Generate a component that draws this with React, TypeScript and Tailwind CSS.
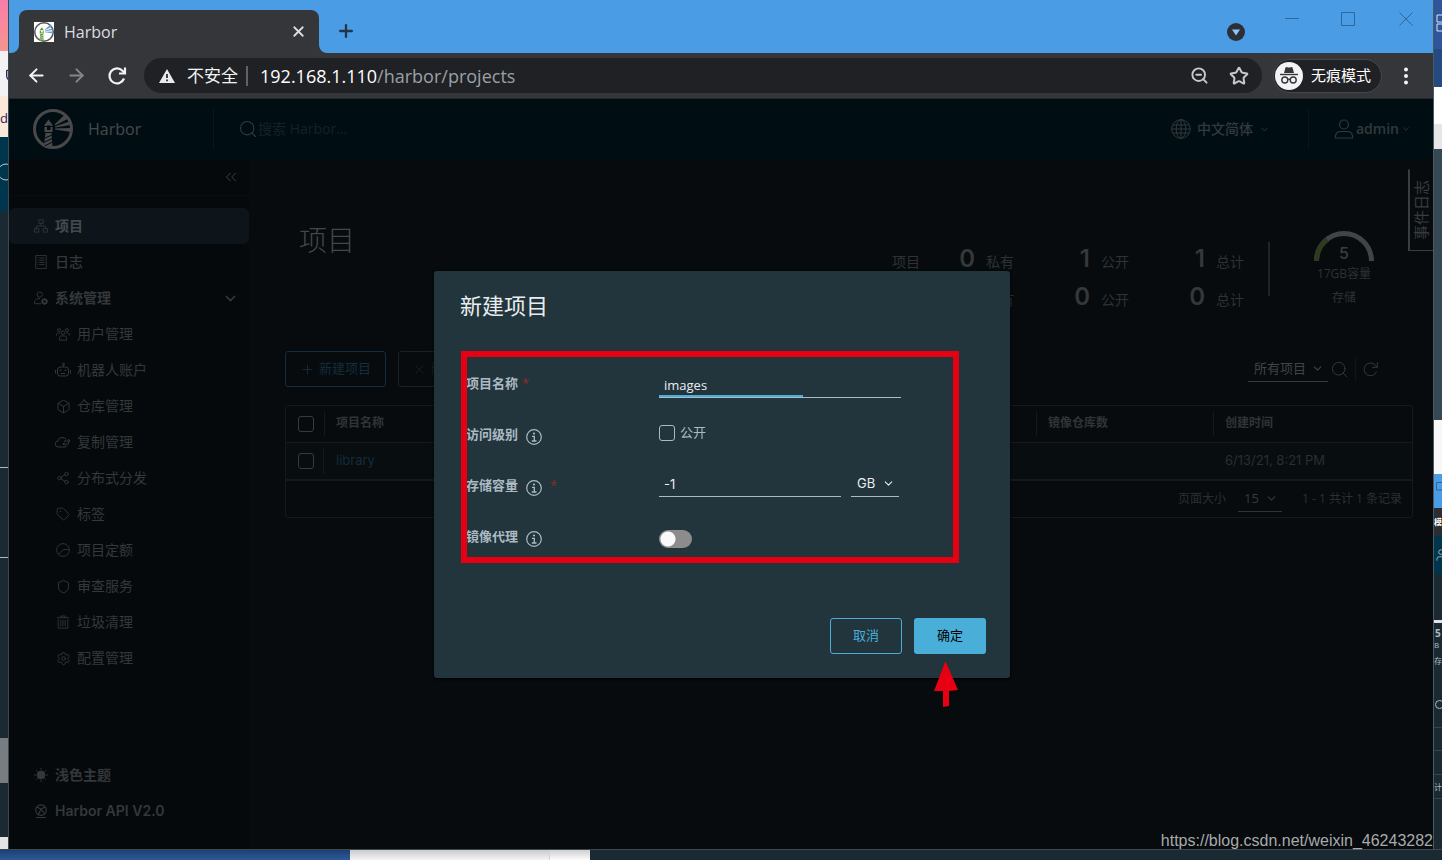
import { FC, ReactNode } from 'react';
import {
  ArrowLeft,
  ArrowRight,
  Box,
  ChevronDown,
  ChevronsLeft,
  Plus,
  Search,
  Settings,
  Share2,
  Shield,
  Star,
  Tag,
  User,
  X,
  ZoomOut,
} from 'lucide-react';

interface IconProps {
  size?: number;
  children?: ReactNode;
}

// Icône au trait sur une grille de 16
const Stroke: FC<IconProps> = ({ size = 14, children }) => (
  <svg width={size} height={size} viewBox="0 0 16 16" fill="none" stroke="currentColor" strokeWidth="1" aria-hidden="true">
    {children}
  </svg>
);

interface HarborLogoProps {
  size: number;
  tower: string;
  ring: string;
  rays: string;
  back: string;
}

const HarborLogo: FC<HarborLogoProps> = ({ size, tower, ring, rays, back }) => (
  <svg width={size} height={size} viewBox="0 0 40 40" aria-hidden="true">
    <circle cx="20" cy="20" r="18.5" fill="none" stroke={ring} strokeWidth="3" />
    <path d="M22 15L32 5.500L35.500 9.500L22 16.500zM22 17.500L36.500 12.500L37.500 16L22 18.500zM22 19.500L38 19V23L22 20.500z" fill={rays} />
    <path d="M11.500 16L15.500 10.500L19.500 16V17H11.500zM11.500 18H19.500V23H11.500zM12.500 24H18.500L19.500 38L11 36z" fill={tower} />
    <path d="M14 16.500h3.500v4.500h-3.500z" fill={back} />
    <path d="M12 29L19 26M11.500 33L19.500 29.500M11.500 37L19.500 33" stroke={back} strokeWidth="1" />
  </svg>
);

const Reload: FC<{ size: number; width: number }> = ({ size, width }) => (
  <svg width={size} height={size} viewBox="0 0 20 20" fill="none" stroke="currentColor" strokeWidth={width} aria-hidden="true">
    <path d="M17 12.500A7.500 7.500 0 1 1 15.500 4.800L17.500 7" />
    <path d="M18 1.500V7.500H12" />
  </svg>
);

const InfoIcon: FC = () => (
  <svg width="16" height="16" viewBox="0 0 16 16" fill="none" stroke="currentColor" aria-hidden="true">
    <circle cx="8" cy="8" r="7.3" strokeWidth="1.200" />
    <circle cx="8" cy="4.500" r="1.100" fill="currentColor" stroke="none" />
    <path d="M6 7.300H8.300V12M5.800 12h4.700" strokeWidth="1.300" />
  </svg>
);

const adminItems: { label: string; icon: ReactNode }[] = [
  {
    label: '用户管理',
    icon: (
      <Stroke>
        <circle cx="8" cy="6.500" r="2" />
        <circle cx="3.500" cy="3.500" r="1.700" />
        <circle cx="12.500" cy="3.500" r="1.700" />
        <path d="M4 15V12Q4 10 8 10T12 12V15zM.5 10V8Q1.500 6.500 4.500 7M15.500 10V8Q14.500 6.500 11.500 7" />
      </Stroke>
    ),
  },
  {
    label: '机器人账户',
    icon: (
      <Stroke size={16}>
        <circle cx="8.500" cy="2" r="1" />
        <path d="M8.500 3V5M5 5H11Q13.500 5 13.500 8V11Q13.500 14 11 14H5Q2.500 14 2.500 11V8Q2.500 5 5 5zM.5 8V11.500M15.500 8V11.500M6 11.500H10" />
        <path d="M5.500 7.500V9M10.500 7.500V9" strokeWidth="1.500" />
      </Stroke>
    ),
  },
  { label: '仓库管理', icon: <Box size={15} strokeWidth={1.5} /> },
  {
    label: '复制管理',
    icon: (
      <Stroke size={16}>
        <path d="M12 11.500Q11.500 13 10 13H3.500A3 3 0 0 1 3 7Q3.500 3.500 7 3.500T11 5.500M9 7H15M13 5L15 7L13 9M14 10H8M9.500 8.500L8 10L9.500 11.500" />
      </Stroke>
    ),
  },
  { label: '分布式分发', icon: <Share2 size={14} strokeWidth={1.5} /> },
  { label: '标签', icon: <Tag size={14} strokeWidth={1.5} /> },
  {
    label: '项目定额',
    icon: (
      <Stroke>
        <circle cx="8" cy="8" r="7.300" />
        <path d="M3 13L8.500 7.500H15" />
      </Stroke>
    ),
  },
  { label: '审查服务', icon: <Shield size={15} strokeWidth={1.5} /> },
  {
    label: '垃圾清理',
    icon: (
      <Stroke>
        <path d="M1 3H15M5.500 3V1.200H10.500V3M2.500 4.500V15H13.500V4.500M5.500 5.500V13M8 5.500V13M10.500 5.500V13" />
      </Stroke>
    ),
  },
  { label: '配置管理', icon: <Settings size={15} strokeWidth={1.5} /> },
];

const TabStrip: FC = () => (
  <div className="flex h-[53px] items-end bg-[#4a9de4] pl-2.5">
    <div className="relative flex h-[43px] w-[300px] items-center rounded-t-lg bg-[#35363a] pr-3 pl-[15px]">
      <svg className="absolute bottom-0 -left-2" width="8" height="8" aria-hidden="true">
        <path d="M8 0V8H0A8 8 0 0 0 8 0z" fill="#35363a" />
      </svg>
      <svg className="absolute -right-2 bottom-0" width="8" height="8" aria-hidden="true">
        <path d="M0 0V8H8A8 8 0 0 1 0 0z" fill="#35363a" />
      </svg>
      <span className="bg-white">
        <HarborLogo size={20} ring="#555555" tower="#5f9a34" rays="#6a9fd0" back="#ffffff" />
      </span>
      <span className="ml-2.5 flex-1 text-base text-[#dcdde0]">Harbor</span>
      <button type="button" aria-label="关闭标签页" className="text-[#dcdde0]">
        <X size={17} strokeWidth={2.5} />
      </button>
    </div>
    <button type="button" aria-label="新标签页" className="mb-3 ml-[17px] text-[#263446]">
      <Plus size={20} strokeWidth={2.8} />
    </button>
    <div className="ml-auto flex h-full items-start text-[#2d679b]">
      <button type="button" aria-label="搜索标签页" className="mt-[23px] mr-10 flex size-[18px] items-center justify-center rounded-full bg-[#2b3036]">
        <svg width="8" height="7" viewBox="0 0 8 7" aria-hidden="true">
          <path d="M0 .5H8L4 6.500z" fill="#8fc4f5" />
        </svg>
      </button>
      <button type="button" aria-label="最小化" className="mt-3 mr-[42px]">
        <svg width="14" height="14" aria-hidden="true"><path d="M0 6.500H14" stroke="currentColor" /></svg>
      </button>
      <button type="button" aria-label="最大化" className="mt-3 mr-11">
        <svg width="14" height="14" aria-hidden="true"><path d="M.5 .5H13.500V13.500H.5z" fill="none" stroke="currentColor" /></svg>
      </button>
      <button type="button" aria-label="关闭" className="mt-3 mr-5">
        <svg width="14" height="14" aria-hidden="true"><path d="M.5 .5L13.500 13.500M13.500 .5L.5 13.500" stroke="currentColor" /></svg>
      </button>
    </div>
  </div>
);

const AddressBar: FC = () => (
  <div className="flex h-[46px] items-center border-b border-[#262729] bg-[#35363a] pr-6 pl-[17px] text-[#f1f3f4]">
    <button type="button" aria-label="后退"><ArrowLeft size={21} strokeWidth={2.3} /></button>
    <button type="button" aria-label="前进" className="ml-[19px] text-[#85868a]"><ArrowRight size={21} strokeWidth={2.3} /></button>
    <button type="button" aria-label="重新加载" className="ml-5"><Reload size={20} width={2.2} /></button>
    <div className="ml-[17px] flex h-[35px] flex-1 items-center rounded-full bg-[#202124] pr-[13px] pl-[15px]">
      <svg width="16" height="14" viewBox="0 0 16 14" aria-hidden="true">
        <path d="M8 0L16 14H0z" fill="#e8eaed" />
        <path d="M8 5V9M8 10.500V12.200" stroke="#202124" strokeWidth="1.700" />
      </svg>
      <span className="ml-3 text-[17px]">不安全</span>
      <span className="ml-2 h-5 w-0.5 bg-[#5f6164]" />
      <span className="ml-3 flex-1 text-lg text-[#9aa0a6]">
        <span className="text-white">192.168.1.110</span>/harbor/projects
      </span>
      <button type="button" aria-label="缩放" className="text-[#c6c8cb]"><ZoomOut size={19} strokeWidth={2.4} /></button>
      <button type="button" aria-label="收藏" className="ml-5 text-[#c6c8cb]"><Star size={20} strokeWidth={2.4} /></button>
    </div>
    <button type="button" className="ml-[11px] flex h-[34px] items-center rounded-full border border-[#46474b] bg-[#202124] pr-2.5 pl-px text-[15px] text-white">
      <svg width="28" height="28" viewBox="0 0 28 28" aria-hidden="true">
        <circle cx="14" cy="14" r="14" fill="#f1f3f4" />
        <path d="M9 11L10.500 5.500Q11 4.500 12.200 5.200Q14 6 15.800 5.200Q17 4.500 17.500 5.500L19 11z" fill="#35363a" />
        <path d="M5 12.500H23" stroke="#35363a" strokeWidth="1.400" />
        <g fill="none" stroke="#35363a" strokeWidth="1.400">
          <circle cx="9.800" cy="18" r="3" />
          <circle cx="18.200" cy="18" r="3" />
          <path d="M12.800 17.500Q14 16.800 15.200 17.500" />
        </g>
      </svg>
      <span className="ml-2">无痕模式</span>
    </button>
    <button type="button" aria-label="菜单" className="ml-[21px]">
      <svg width="6" height="18" viewBox="0 0 6 18" fill="currentColor" aria-hidden="true">
        <circle cx="3" cy="2.500" r="2" />
        <circle cx="3" cy="9" r="2" />
        <circle cx="3" cy="15.500" r="2" />
      </svg>
    </button>
  </div>
);

const PortalHeader: FC = () => (
  <header className="flex h-[60px] items-center bg-[#000e14] pl-6 text-[#33393b]">
    <HarborLogo size={40} ring="#494949" tower="#494949" rays="#494949" back="#000e14" />
    <span className="ml-[15px] w-[125px] text-base text-[#494949]">Harbor</span>
    <span className="h-10 w-px bg-[#07171e]" />
    <label className="ml-6 flex flex-1 items-center">
      <Search size={20} strokeWidth={1.4} />
      <input
        type="text"
        placeholder="搜索 Harbor..."
        aria-label="搜索 Harbor"
        className="w-40 bg-transparent text-sm placeholder:text-[#162126]"
      />
    </label>
    <button type="button" className="flex items-center text-sm font-medium">
      <svg width="20" height="20" viewBox="0 0 20 20" fill="none" stroke="currentColor" aria-hidden="true">
        <circle cx="10" cy="10" r="9.300" />
        <ellipse cx="10" cy="10" rx="4.800" ry="9.300" />
        <path d="M10 .7V19.300M.7 10H19.300M2 6H18M2 14H18" />
      </svg>
      <span className="ml-1.5">中文简体</span>
      <ChevronDown size={11} strokeWidth={2} className="ml-1.5" />
    </button>
    <span className="ml-[38px] h-10 w-px bg-[#07171e]" />
    <button type="button" className="mr-[22px] ml-[25px] flex items-center text-sm font-semibold">
      <svg width="20" height="20" viewBox="0 0 20 20" fill="none" stroke="currentColor" strokeWidth="1.200" aria-hidden="true">
        <circle cx="10" cy="5.500" r="4.500" />
        <path d="M1.500 19V17Q2 12.500 7 12.500H13Q18 12.500 18.500 17V19z" />
      </svg>
      <span className="ml-0.5">admin</span>
      <ChevronDown size={10} strokeWidth={2} className="ml-0.5" />
    </button>
  </header>
);

const Sidebar: FC = () => (
  <nav className="flex w-60 shrink-0 flex-col bg-[#05090c] text-sm text-[#33383a]">
    <div className="flex h-[37px] items-center justify-end border-b border-[#090d10] pr-[9px]">
      <button type="button" aria-label="收起"><ChevronsLeft size={18} strokeWidth={1.4} /></button>
    </div>
    <a href="#projects" className="mt-3 flex h-9 items-center gap-[7px] rounded-md bg-[#0d151b] pl-[25px] font-bold">
      <Stroke>
        <path d="M5.500 1H10.500V5H5.500zM.5 11H5.500V15H.5zM10.500 11H15.500V15H10.500zM8 5V8M3 11V8H13V11" />
      </Stroke>
      <span className="text-[#454a4d]">项目</span>
    </a>
    <a href="#logs" className="flex h-9 items-center gap-[7px] pl-[25px] font-medium">
      <Stroke>
        <path d="M2 .5H14V15.500H2zM6 3.500H12M6 6H12M6 8.500H12M6 11H12M4 3.500H5M4 6H5M4 8.500H5M4 11H5" />
      </Stroke>
      日志
    </a>
    <button type="button" className="flex h-9 items-center gap-[7px] pr-2.5 pl-[25px] font-bold">
      <Stroke>
        <circle cx="6.500" cy="4" r="3" />
        <path d="M8 14.500H.5V11.500Q2 8.500 7 8.500" />
        <circle cx="12" cy="12" r="2.500" strokeWidth="2" />
        <path d="M12 8V16M8 12H16M9.200 9.200L14.800 14.800M14.800 9.200L9.200 14.800" strokeDasharray="1.500 5" />
      </Stroke>
      系统管理
      <ChevronDown size={17} strokeWidth={2} className="ml-auto" />
    </button>
    {adminItems.map(item => (
      <a key={item.label} href="#admin" className="flex h-9 items-center pl-[46px]">
        <span className="flex w-4 justify-center">{item.icon}</span>
        <span className="ml-1.5">{item.label}</span>
      </a>
    ))}
    <button type="button" className="mt-auto flex h-9 items-center gap-[7px] pl-[25px] font-bold">
      <Stroke>
        <circle cx="8" cy="8" r="4.500" fill="currentColor" />
        <path d="M8 0V2.500M8 13.500V16M0 8H2.500M13.500 8H16M2.500 2.500L4 4M12 12L13.500 13.500M13.500 2.500L12 4M4 12L2.500 13.500" />
      </Stroke>
      浅色主题
    </button>
    <a href="#api" className="mb-5 flex h-9 items-center gap-[7px] pl-[25px] font-['Inter',sans-serif] font-semibold">
      <Stroke>
        <circle cx="8" cy="7" r="6" strokeWidth="1.300" />
        <path d="M3 3L8 6L13 3M8 6L5 12M8 6L12 11M2.500 15.500H13.500" strokeWidth="1.300" />
      </Stroke>
      Harbor API V2.0
    </a>
  </nav>
);

const statRows = [
  { label: '项目', priv: 0, pub: 1, total: 1 },
  { label: '镜像仓库', priv: 0, pub: 0, total: 0 },
];

const Statistics: FC = () => (
  <div className="flex items-start pr-[39px] text-[#2e3234]">
    <div className="mt-[21px] grid auto-rows-[38px] grid-cols-[48px_24px_28px_65px_28px_65px_28px] items-baseline gap-x-[11px] text-sm whitespace-nowrap">
      {statRows.map(row => [
        <span key="l">{row.label}</span>,
        <Count key="a" value={row.priv} />,
        <span key="b">私有</span>,
        <Count key="c" value={row.pub} />,
        <span key="d">公开</span>,
        <Count key="e" value={row.total} />,
        <span key="f">总计</span>,
      ])}
    </div>
    <span className="mt-5 ml-6 h-[54px] w-0.5 bg-[#212426]" />
    <div className="mt-[9px] ml-11 flex w-[60px] flex-col items-center text-xs leading-6 whitespace-nowrap">
      <svg width="60" height="31" viewBox="0 0 60 31" fill="none" strokeWidth="5">
        <path d="M2.500 30A27.500 27.500 0 0 1 57.500 30" stroke="#414446" />
        <path d="M2.500 30A27.500 27.500 0 0 1 13 8.500" stroke="#2d3a20" />
        <text x="30" y="28" textAnchor="middle" fill="#3a3e40" stroke="none" className="font-['Inter',sans-serif] text-base font-medium">5</text>
      </svg>
      <span>17GB容量</span>
      <span>存储</span>
    </div>
  </div>
);

const Count: FC<{ value: number }> = ({ value }) => (
  <span className="text-right font-['Inter',sans-serif] text-2xl font-semibold text-[#34383a]">{value}</span>
);

const ProjectTable: FC = () => (
  <div className="mt-[18px] rounded-[3px] border border-[#14191c] text-xs text-[#2b2f31]">
    <table className="w-full table-fixed text-left">
      <colgroup>
        <col className="w-[38px]" />
        <col />
        <col className="w-[177px]" />
        <col className="w-[199px]" />
      </colgroup>
      <thead>
        <tr className="h-9 text-[#303436]">
          <th className="p-0 pl-3"><GridCheck label="全选" /></th>
          <th className="p-0"><Head>项目名称</Head></th>
          <th className="p-0"><Head>镜像仓库数</Head></th>
          <th className="p-0"><Head>创建时间</Head></th>
        </tr>
      </thead>
      <tbody>
        <tr className="h-[38px] border-t border-b-2 border-[#14191c] bg-[#080d10]">
          <td className="p-0 pl-3"><GridCheck label="选择 library" /></td>
          <td className="p-0">
            <div className="-ml-px h-[26px] border-l border-[#14191c] pl-3 font-['Inter',sans-serif] text-[13px] leading-6">
              <a href="#library" className="text-[#142c3b]">library</a>
            </div>
          </td>
          <td className="p-0" />
          <td className="p-0 pl-3 font-['Inter',sans-serif] text-[13px]">6/13/21, 8:21 PM</td>
        </tr>
      </tbody>
    </table>
    <div className="flex h-9 items-center justify-end pr-2.5">
      <label htmlFor="page-size">页面大小</label>
      <span className="mx-3">
        <Picker id="page-size" options={['15', '25', '50']} box="w-11" tone="border-[#303436] text-[#363a3c] text-[13px]" />
      </span>
      <span className="ml-2">1 - 1 共计 1 条记录</span>
    </div>
  </div>
);

const Head: FC<{ children: ReactNode }> = ({ children }) => (
  <div className="h-[25px] border-l border-[#14191c] pl-[11px] leading-6 font-bold">{children}</div>
);

const GridCheck: FC<{ label: string }> = ({ label }) => (
  <input type="checkbox" aria-label={label} className="block size-4 appearance-none rounded-[3px] border border-[#363a3c]" />
);

interface PickerProps {
  id: string;
  options: string[];
  box: string;
  tone: string;
  label?: string;
}

const Picker: FC<PickerProps> = ({ id, options, box, tone, label }) => (
  <span className={`relative inline-flex h-[25px] items-center border-b ${box} ${tone}`}>
    <select id={id} aria-label={label} className="h-full w-full appearance-none bg-transparent pl-[6px]">
      {options.map(option => (
        <option key={option}>{option}</option>
      ))}
    </select>
    <ChevronDown size={13} strokeWidth={2} className="pointer-events-none absolute right-1" />
  </span>
);

const ProjectsPage: FC = () => (
  <main className="min-w-0 flex-1 bg-[#070b0e] pr-5 pl-9">
    <div className="flex items-start justify-between pt-[63px] pl-3.5">
      <h1 className="text-[28px] leading-9 font-light text-[#43474a]">项目</h1>
      <Statistics />
    </div>
    <div className="mt-8 flex h-9 items-center pr-[34px] text-[13px] text-[#363a3c]">
      <button type="button" className="flex h-9 w-[101px] items-center justify-center gap-1 rounded-[3px] border border-[#142c3b] text-[#142c3b]">
        <Plus size={15} strokeWidth={1.5} />
        新建项目
      </button>
      <button type="button" disabled className="ml-3 flex h-9 w-20 items-center rounded-[3px] border border-[#1c2022] pl-[13px] text-[#1c2022]">
        <X size={15} strokeWidth={1.5} className="mr-1" />
        删除
      </button>
      <span className="ml-auto">
        <Picker id="project-filter" label="项目筛选" options={['所有项目', '私有项目', '公开项目']} box="w-20" tone="border-[#363a3c] text-[#404446]" />
      </span>
      <button type="button" aria-label="搜索" className="ml-0.5"><Search size={19} strokeWidth={1.2} /></button>
      <span className="ml-1.5 h-6 w-px bg-[#111518]" />
      <button type="button" aria-label="刷新" className="ml-1.5"><Reload size={17} width={1.1} /></button>
    </div>
    <ProjectTable />
  </main>
);

const FormLabel: FC<{ htmlFor: string; info?: boolean; required?: boolean; children: ReactNode }> = ({ htmlFor, info, required, children }) => (
  <label htmlFor={htmlFor} className="flex items-center font-bold text-[#acbac3]">
    {children}
    {info && <span className="mt-[3px] ml-2"><InfoIcon /></span>}
    {required && <span className={info ? 'ml-2 font-normal text-[#8f2c20]' : 'ml-1 font-normal text-[#8f2c20]'}>*</span>}
  </label>
);

const NewProjectModal: FC = () => (
  <div className="absolute inset-0 flex items-center justify-center pl-0.5">
    <div role="dialog" aria-label="新建项目" className="relative w-[576px] rounded-[3px] bg-[#22343c] pt-[18px] pb-6 text-[13px] text-[#e9ecef] shadow-[0_1px_3px_#000]">
      <h2 className="pl-[26px] text-[22px] leading-8">新建项目</h2>
      <form className="mt-[38px] grid auto-rows-[51px] grid-cols-[193px_1fr] items-center pl-8">
        <FormLabel htmlFor="project-name" required>项目名称</FormLabel>
        <div className="mt-0.5 w-[242px] border-b border-[#acbac3]">
          <input
            id="project-name"
            type="text"
            defaultValue="images"
            className="block h-6 w-full bg-[linear-gradient(#49afd9,#49afd9)] bg-[length:144px_2px] bg-[position:0_100%] bg-no-repeat px-[5px] outline-none"
          />
        </div>
        <FormLabel htmlFor="project-public" info>访问级别</FormLabel>
        <label className="mb-1 flex items-center gap-[5px] text-[#acbac3]">
          <input id="project-public" type="checkbox" className="size-4 appearance-none rounded-[3px] border border-[#acbac3]" />
          公开
        </label>
        <FormLabel htmlFor="project-quota" info required>存储容量</FormLabel>
        <div className="mb-1 flex gap-2.5">
          <input
            id="project-quota"
            type="text"
            defaultValue="-1"
            className="h-[25px] w-[182px] border-b border-[#acbac3] px-[5px] font-['Inter',sans-serif]"
          />
          <Picker id="quota-unit" label="容量单位" options={['GB', 'MB', 'TB']} box="w-12" tone="border-[#acbac3] font-['Inter',sans-serif]" />
        </div>
        <FormLabel htmlFor="project-proxy" info>镜像代理</FormLabel>
        <input
          id="project-proxy"
          type="checkbox"
          role="switch"
          className="mt-1 h-[18px] w-[33px] appearance-none rounded-full bg-[#8c8c8c] bg-[radial-gradient(circle_at_9px_9px,#fafafa_7px,transparent_8px)]"
        />
      </form>
      <div className="mt-[55px] flex justify-end gap-3 pr-6">
        <button type="button" className="h-9 w-[72px] rounded-[3px] border border-[#49afd9] text-[#49afd9]">取消</button>
        <button type="button" className="h-9 w-[72px] rounded-[3px] bg-[#49afd9] text-black">确定</button>
      </div>
      {/* Annotations rouges */}
      <div className="pointer-events-none absolute top-20 left-[27px] h-[212px] w-[498px] border-[6px] border-[#e60012]" />
      <svg className="absolute top-[390px] left-[500px]" width="24" height="46" viewBox="0 0 24 46" aria-hidden="true">
        <path d="M11.500 0L24 29L15 30V45L9 46V30H0z" fill="#e60012" />
      </svg>
    </div>
  </div>
);

// Fenêtres visibles derrière le navigateur
const LeftStrip: FC = () => (
  <div className="flex w-[9px] shrink-0 flex-col overflow-hidden border-r border-[#3b4a50] bg-[#1b2a32]">
    <div className="h-[51px] bg-[linear-gradient(#f97ea9,#f5958f)]" />
    <div className="h-[45px] bg-[#f3f1f4] pt-4 pl-1 text-[#2b2156]"><Shield size={16} /></div>
    <div className="h-[41px] bg-[#fbe8d8] pt-3 text-[13px] leading-5 text-[#2b2156]">d</div>
    <div className="h-[74px] bg-[#00364d] pt-[26px] text-[#b5c6cf]">
      <svg width="18" height="18" aria-hidden="true"><circle cx="6" cy="9" r="8" fill="none" stroke="currentColor" /></svg>
    </div>
    <div className="h-[257px] border-b border-[#acbac3]" />
    <div className="h-[90px] border-b border-[#acbac3]" />
    <div className="h-[180px]" />
    <div className="h-[45px] bg-[#777d81]" />
    <div className="flex-1" />
    <div className="h-3 bg-[#e4e4e4]" />
  </div>
);

const RightStrip: FC = () => (
  <div className="flex w-[9px] shrink-0 flex-col overflow-hidden border-l border-[#4b5a60] bg-[#1b2a32] text-[#acbac3]">
    <div className="h-[49px] bg-[#2f559b] pt-3.5 pl-0.5">
      <svg width="16" height="18" fill="none" stroke="#dce6f5" aria-hidden="true"><path d="M1 1H7V8H1zM1 10H7V17H1z" /></svg>
    </div>
    <div className="h-[38px] bg-[#254a80]" />
    <div className="h-[37px] bg-white" />
    <div className="h-[25px] bg-[#e6e6e6]" />
    <div className="h-[271px] bg-[#344954]" />
    <div className="h-[54px] bg-[#f8f8f8]" />
    <div className="h-[34px] bg-[#4a9de4] pt-2 pl-0.5">
      <svg width="8" height="9" fill="none" stroke="#2d679b" aria-hidden="true"><path d="M9 .5H.5V8H9" /></svg>
    </div>
    <div className="h-7 bg-[#2c2d30] pt-2 text-[8px] leading-3 font-bold text-white">模</div>
    <div className="h-[38px] bg-[#00364d] pt-3"><User size={14} strokeWidth={1.5} /></div>
    <div className="mt-[46px] border-t-[3px] border-[#dfe3e6] pt-1 pl-px text-[10px] leading-3 font-bold">5</div>
    <div className="text-[8px] leading-3">B</div>
    <div className="pt-1 text-[8px] leading-3">存</div>
    <div className="mt-8"><Search size={12} /></div>
    <div className="mt-4 h-6 border-y border-[#35454d]" />
    <div className="h-6 border-b border-[#35454d]" />
    <div className="h-6 border-b border-[#35454d] text-[8px] leading-6">计</div>
  </div>
);

export default function App() {
  return (
    <div className="flex h-screen flex-col overflow-hidden bg-[#1b2a32] font-['Open_Sans','Noto_Sans_CJK_SC',sans-serif]">
      <div className="flex min-h-0 flex-1">
        <LeftStrip />
        <div className="flex min-w-0 flex-1 flex-col">
          <TabStrip />
          <AddressBar />
          <div className="relative flex min-h-0 flex-1 flex-col">
            <PortalHeader />
            <div className="flex min-h-0 flex-1">
              <Sidebar />
              <ProjectsPage />
            </div>
            <button
              type="button"
              className="absolute top-[70px] right-0 flex h-[82px] w-[25px] items-center justify-center border-y border-l-2 border-[#3a3e40] border-t-transparent text-[15px] text-[#383c3e]"
            >
              <span className="rotate-180 [text-orientation:sideways] [writing-mode:vertical-rl]">事件日志</span>
            </button>
            <NewProjectModal />
            <span className="absolute right-0 bottom-0 font-['Liberation_Sans',sans-serif] text-base leading-4 text-[#a8aaab]">
              https://blog.csdn.net/weixin_46243282
            </span>
          </div>
        </div>
        <RightStrip />
      </div>
      <div className="flex h-[11px] shrink-0 border-t border-[#3b4a50]">
        <div className="w-[350px] bg-[linear-gradient(#1d3f72,#2d5a99)]" />
        <div className="w-[200px] border-r border-[#d5d5d5] bg-[linear-gradient(#c9c9c9,#f5f5f5)]" />
        <div className="w-10 bg-[linear-gradient(#cfcfcf,#fdfdfd)]" />
      </div>
    </div>
  );
}
